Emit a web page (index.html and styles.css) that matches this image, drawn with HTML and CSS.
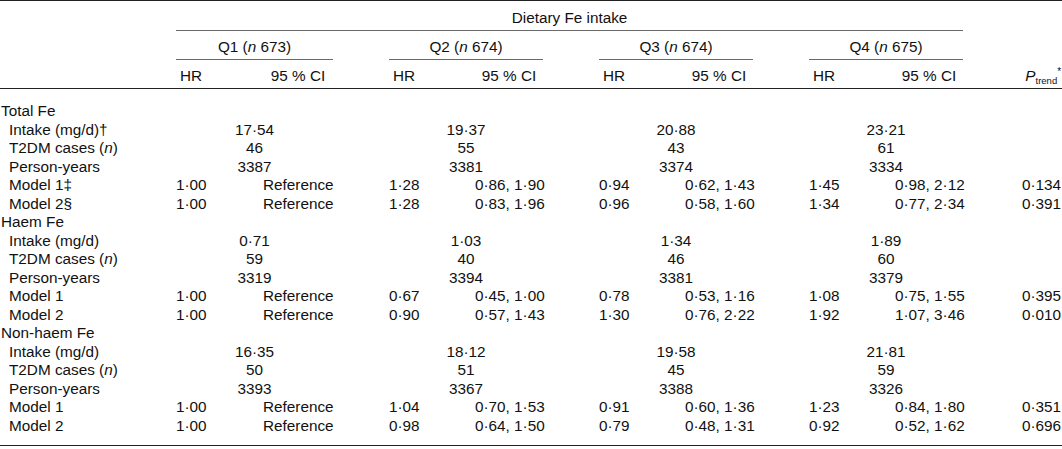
FILE: index.html
```html
<!DOCTYPE html>
<html lang="en">
<head>
<meta charset="utf-8">
<title>Dietary Fe intake and T2DM</title>
<link rel="stylesheet" href="styles.css">
</head>
<body>
<table class="tbl">
  <colgroup>
    <col class="c-label">
    <col class="c-hr"><col class="c-mid1"><col class="c-ci1">
    <col class="c-gap">
    <col class="c-hr"><col class="c-mid"><col class="c-ci">
    <col class="c-gap">
    <col class="c-hr"><col class="c-mid"><col class="c-ci">
    <col class="c-gap">
    <col class="c-hr"><col class="c-mid"><col class="c-ci">
    <col class="c-gapp">
    <col class="c-p">
  </colgroup>
  <thead>
    <tr class="h1">
      <th></th>
      <th colspan="15" class="span-line">Dietary Fe intake</th>
      <th></th>
      <th></th>
    </tr>
    <tr class="h2">
      <th></th>
      <th colspan="3" class="span-line">Q1 (<i>n</i> 673)</th>
      <th></th>
      <th colspan="3" class="span-line">Q2 (<i>n</i> 674)</th>
      <th></th>
      <th colspan="3" class="span-line">Q3 (<i>n</i> 674)</th>
      <th></th>
      <th colspan="3" class="span-line">Q4 (<i>n</i> 675)</th>
      <th></th>
      <th></th>
    </tr>
    <tr class="h3">
      <th></th>
      <th>HR</th><th></th><th>95 % CI</th>
      <th></th>
      <th>HR</th><th></th><th>95 % CI</th>
      <th></th>
      <th>HR</th><th></th><th>95 % CI</th>
      <th></th>
      <th>HR</th><th></th><th>95 % CI</th>
      <th></th>
      <th class="pcol"><i>P</i><span class="sub">trend</span><span class="sup">*</span></th>
    </tr>
  </thead>
  <tbody>
    <tr class="first">
      <td class="lab grp">Total Fe</td>
      <td colspan="17"></td>
    </tr>
    <tr>
      <td class="lab">Intake (mg/d)†</td>
      <td colspan="3">17·54</td><td></td>
      <td colspan="3">19·37</td><td></td>
      <td colspan="3">20·88</td><td></td>
      <td colspan="3">23·21</td><td></td><td></td>
    </tr>
    <tr>
      <td class="lab">T2DM cases (<i>n</i>)</td>
      <td colspan="3">46</td><td></td>
      <td colspan="3">55</td><td></td>
      <td colspan="3">43</td><td></td>
      <td colspan="3">61</td><td></td><td></td>
    </tr>
    <tr>
      <td class="lab">Person-years</td>
      <td colspan="3">3387</td><td></td>
      <td colspan="3">3381</td><td></td>
      <td colspan="3">3374</td><td></td>
      <td colspan="3">3334</td><td></td><td></td>
    </tr>
    <tr>
      <td class="lab">Model 1‡</td>
      <td>1·00</td><td></td><td>Reference</td><td></td>
      <td>1·28</td><td></td><td>0·86, 1·90</td><td></td>
      <td>0·94</td><td></td><td>0·62, 1·43</td><td></td>
      <td>1·45</td><td></td><td>0·98, 2·12</td><td></td>
      <td class="pcol">0·134</td>
    </tr>
    <tr>
      <td class="lab">Model 2§</td>
      <td>1·00</td><td></td><td>Reference</td><td></td>
      <td>1·28</td><td></td><td>0·83, 1·96</td><td></td>
      <td>0·96</td><td></td><td>0·58, 1·60</td><td></td>
      <td>1·34</td><td></td><td>0·77, 2·34</td><td></td>
      <td class="pcol">0·391</td>
    </tr>
    <tr>
      <td class="lab grp">Haem Fe</td>
      <td colspan="17"></td>
    </tr>
    <tr>
      <td class="lab">Intake (mg/d)</td>
      <td colspan="3">0·71</td><td></td>
      <td colspan="3">1·03</td><td></td>
      <td colspan="3">1·34</td><td></td>
      <td colspan="3">1·89</td><td></td><td></td>
    </tr>
    <tr>
      <td class="lab">T2DM cases (<i>n</i>)</td>
      <td colspan="3">59</td><td></td>
      <td colspan="3">40</td><td></td>
      <td colspan="3">46</td><td></td>
      <td colspan="3">60</td><td></td><td></td>
    </tr>
    <tr>
      <td class="lab">Person-years</td>
      <td colspan="3">3319</td><td></td>
      <td colspan="3">3394</td><td></td>
      <td colspan="3">3381</td><td></td>
      <td colspan="3">3379</td><td></td><td></td>
    </tr>
    <tr>
      <td class="lab">Model 1</td>
      <td>1·00</td><td></td><td>Reference</td><td></td>
      <td>0·67</td><td></td><td>0·45, 1·00</td><td></td>
      <td>0·78</td><td></td><td>0·53, 1·16</td><td></td>
      <td>1·08</td><td></td><td>0·75, 1·55</td><td></td>
      <td class="pcol">0·395</td>
    </tr>
    <tr>
      <td class="lab">Model 2</td>
      <td>1·00</td><td></td><td>Reference</td><td></td>
      <td>0·90</td><td></td><td>0·57, 1·43</td><td></td>
      <td>1·30</td><td></td><td>0·76, 2·22</td><td></td>
      <td>1·92</td><td></td><td>1·07, 3·46</td><td></td>
      <td class="pcol">0·010</td>
    </tr>
    <tr>
      <td class="lab grp">Non-haem Fe</td>
      <td colspan="17"></td>
    </tr>
    <tr>
      <td class="lab">Intake (mg/d)</td>
      <td colspan="3">16·35</td><td></td>
      <td colspan="3">18·12</td><td></td>
      <td colspan="3">19·58</td><td></td>
      <td colspan="3">21·81</td><td></td><td></td>
    </tr>
    <tr>
      <td class="lab">T2DM cases (<i>n</i>)</td>
      <td colspan="3">50</td><td></td>
      <td colspan="3">51</td><td></td>
      <td colspan="3">45</td><td></td>
      <td colspan="3">59</td><td></td><td></td>
    </tr>
    <tr>
      <td class="lab">Person-years</td>
      <td colspan="3">3393</td><td></td>
      <td colspan="3">3367</td><td></td>
      <td colspan="3">3388</td><td></td>
      <td colspan="3">3326</td><td></td><td></td>
    </tr>
    <tr>
      <td class="lab">Model 1</td>
      <td>1·00</td><td></td><td>Reference</td><td></td>
      <td>1·04</td><td></td><td>0·70, 1·53</td><td></td>
      <td>0·91</td><td></td><td>0·60, 1·36</td><td></td>
      <td>1·23</td><td></td><td>0·84, 1·80</td><td></td>
      <td class="pcol">0·351</td>
    </tr>
    <tr class="last">
      <td class="lab">Model 2</td>
      <td>1·00</td><td></td><td>Reference</td><td></td>
      <td>0·98</td><td></td><td>0·64, 1·50</td><td></td>
      <td>0·79</td><td></td><td>0·48, 1·31</td><td></td>
      <td>0·92</td><td></td><td>0·52, 1·62</td><td></td>
      <td class="pcol">0·696</td>
    </tr>
  </tbody>
</table>
</body>
</html>
```

FILE: styles.css
```css
html, body {
  margin: 0;
  padding: 0;
  background: #ffffff;
}

body {
  font-family: "Liberation Sans", Arial, sans-serif;
  font-size: 15.3px;
  color: #111111;
}

.tbl {
  width: 1062px;
  table-layout: fixed;
  border-collapse: separate;
  border-spacing: 0;
  border-top: 1px solid #222222;
  border-bottom: 1px solid #222222;
}

.c-label { width: 176px; }
.c-hr { width: 30px; }
.c-mid1 { width: 57px; }
.c-mid { width: 56px; }
.c-ci1 { width: 70px; }
.c-ci { width: 68px; }
.c-gap { width: 56px; }
.c-gapp { width: 57px; }
.c-p { width: 42px; }

.tbl th,
.tbl td {
  padding: 0;
  font-weight: normal;
  text-align: center;
  vertical-align: top;
  white-space: nowrap;
  overflow: visible;
}

.tbl th {
  line-height: 18px;
}

.tbl td {
  line-height: 18.5px;
}

.h1 th {
  padding-top: 8px;
  padding-bottom: 3px;
}

.h2 th {
  padding-top: 7px;
  padding-bottom: 3px;
}

.h3 th {
  padding-top: 7px;
  padding-bottom: 3px;
  border-bottom: 1px solid #222222;
}

.span-line {
  border-bottom: 1px solid #6a6a6a;
}

.tbl .lab {
  text-align: left;
  padding-left: 9px;
}

.tbl .lab.grp {
  padding-left: 1px;
}

.first td {
  padding-top: 13px;
}

.last td {
  padding-bottom: 10px;
}

.tbl .pcol {
  text-align: right;
  padding-right: 1px;
}

.sub {
  font-size: 9.5px;
  line-height: 0;
  position: relative;
  top: 3px;
}

.sup {
  font-size: 10px;
  line-height: 0;
  position: relative;
  top: -6px;
}
```
